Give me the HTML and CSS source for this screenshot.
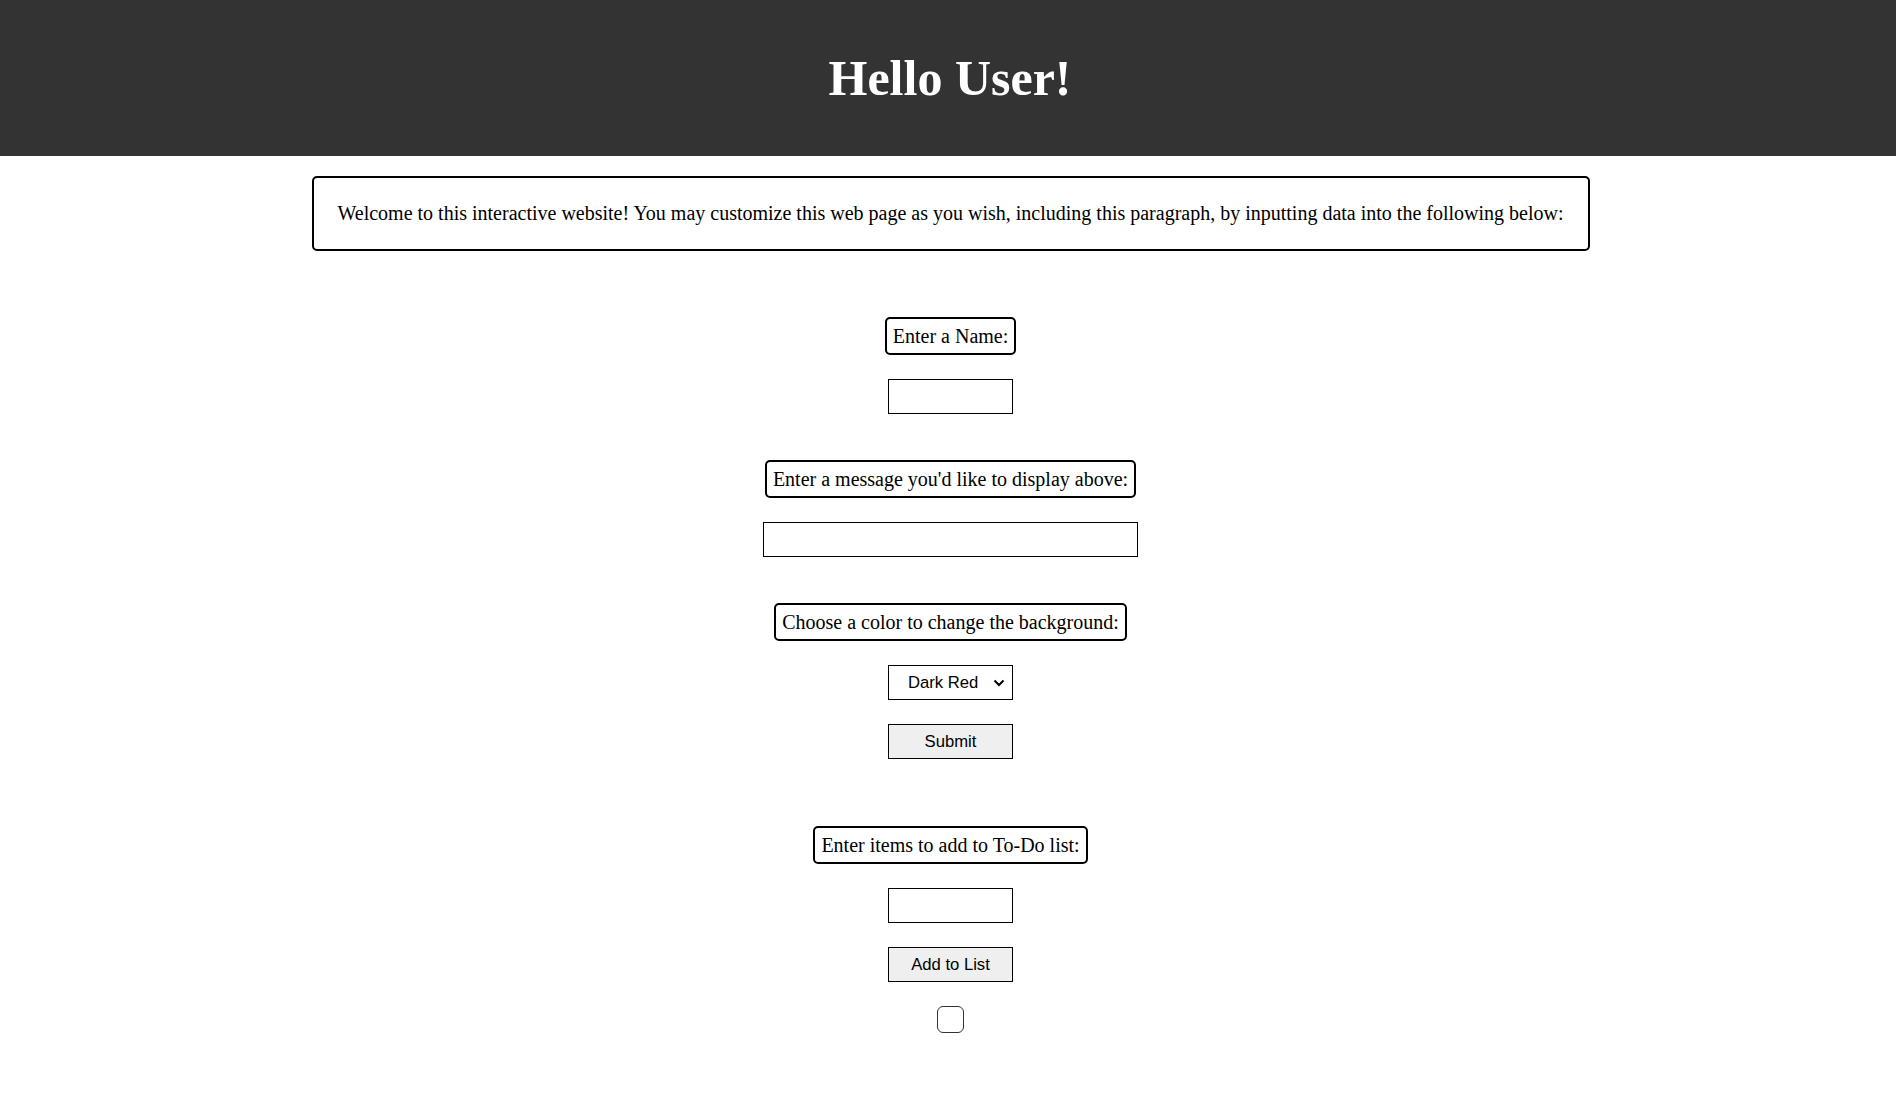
FILE: index.html
```html
<!DOCTYPE html>
<html lang="en">
<head>
<meta charset="utf-8">
<title>Hello User!</title>
<link rel="stylesheet" href="styles.css">
</head>
<body>
<header class="top">
  <h1 class="title">Hello User!</h1>
</header>
<main class="page">
  <p class="intro">Welcome to this interactive website! You may customize this web page as you wish, including this paragraph, by inputting data into the following below:</p>

  <div class="group">
    <label class="tag" for="name">Enter a Name:</label>
    <input class="field" id="name" type="text">
  </div>

  <div class="group">
    <label class="tag" for="msg">Enter a message you'd like to display above:</label>
    <input class="field field-wide" id="msg" type="text">
  </div>

  <div class="group">
    <label class="tag" for="color">Choose a color to change the background:</label>
    <div class="select-wrap">
      <select class="picker" id="color">
        <option>Dark Red</option>
        <option>Dark Blue</option>
        <option>Dark Green</option>
      </select>
      <svg class="chev" width="12" height="8" viewBox="0 0 12 8"><path d="M1.5 1.5 L6 6 L10.5 1.5" fill="none" stroke="#000" stroke-width="2"/></svg>
    </div>
    <button class="btn" type="button">Submit</button>
  </div>

  <div class="group group-todo">
    <label class="tag" for="todo">Enter items to add to To-Do list:</label>
    <input class="field" id="todo" type="text">
    <button class="btn" type="button">Add to List</button>
    <input class="check" type="checkbox">
  </div>
</main>
</body>
</html>
```
FILE: styles.css
```css
html, body {
  margin: 0;
  padding: 0;
  background: #ffffff;
}

body {
  font-family: "Liberation Serif", "Times New Roman", serif;
  color: #000;
}

.top {
  background: #333333;
  height: 156px;
  display: flex;
  align-items: center;
  justify-content: center;
  padding-left: 4px;
}

.title {
  margin: 0;
  color: #ffffff;
  font-size: 50px;
  font-weight: bold;
  line-height: 58px;
}

.page {
  display: flex;
  flex-direction: column;
  align-items: center;
  padding-left: 5px;
  padding-top: 20px;
}

.intro {
  box-sizing: border-box;
  width: 1278px;
  height: 75px;
  margin: 0 0 66px 0;
  border: 2px solid #000;
  border-radius: 5px;
  padding: 0 20px;
  display: flex;
  align-items: center;
  justify-content: center;
  white-space: nowrap;
  font-size: 20px;
  line-height: 23px;
}

.group {
  display: flex;
  flex-direction: column;
  align-items: center;
  gap: 24px;
  margin-bottom: 46px;
}

.group-todo {
  margin-top: 21px;
}

.tag {
  display: block;
  border: 2px solid #000;
  border-radius: 5px;
  padding: 5px 6px;
  font-size: 20px;
  line-height: 24px;
}

.field {
  box-sizing: border-box;
  width: 125px;
  height: 35px;
  margin: 0;
  border: 1px solid #000;
  border-radius: 0;
  background: #fff;
  font-family: "Liberation Sans", Arial, sans-serif;
  font-size: 16.67px;
  padding: 2px 4px;
}

.field-wide {
  width: 375px;
}

.select-wrap {
  position: relative;
  width: 125px;
  height: 35px;
}

.picker {
  box-sizing: border-box;
  appearance: none;
  -webkit-appearance: none;
  width: 125px;
  height: 35px;
  margin: 0;
  border: 1px solid #000;
  border-radius: 0;
  background: #fff;
  color: #000;
  font-family: "Liberation Sans", Arial, sans-serif;
  font-size: 16.67px;
  padding: 0 0 0 19px;
}

.chev {
  position: absolute;
  right: 8px;
  top: 14px;
  pointer-events: none;
}

.btn {
  box-sizing: border-box;
  width: 125px;
  height: 35px;
  margin: 0;
  border: 1px solid #000;
  border-radius: 0;
  background: #efefef;
  color: #000;
  font-family: "Liberation Sans", Arial, sans-serif;
  font-size: 16.67px;
  padding: 0;
}

.check {
  appearance: none;
  -webkit-appearance: none;
  box-sizing: border-box;
  width: 27px;
  height: 27px;
  margin: 0;
  border: 1.5px solid #333;
  border-radius: 6px;
  background: #fff;
}
```
